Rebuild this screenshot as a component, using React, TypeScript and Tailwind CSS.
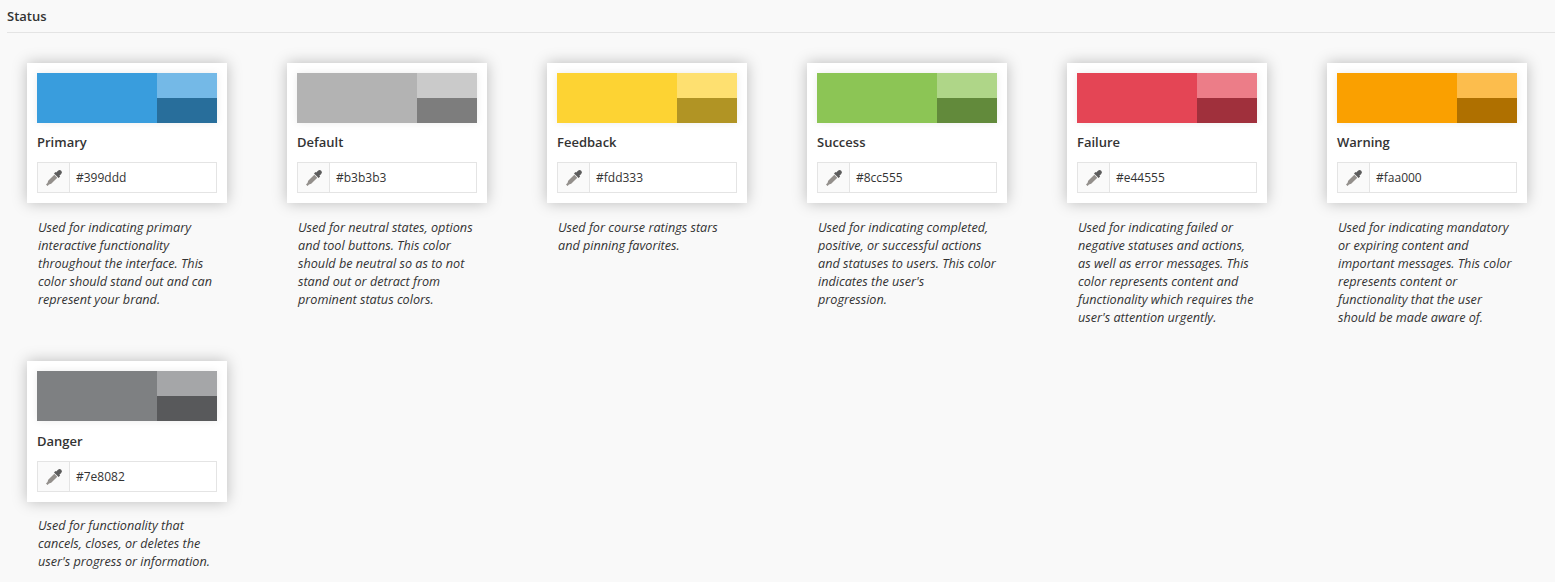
const swatches = [
  {
    name: "Primary",
    hex: "#399ddd",
    main: "bg-[#399ddd]",
    light: "bg-[#74b9e7]",
    dark: "bg-[#286e9b]",
    lines: [
      "Used for indicating primary",
      "interactive functionality",
      "throughout the interface. This",
      "color should stand out and can",
      "represent your brand.",
    ],
  },
  {
    name: "Default",
    hex: "#b3b3b3",
    main: "bg-[#b3b3b3]",
    light: "bg-[#cacaca]",
    dark: "bg-[#7d7d7d]",
    lines: [
      "Used for neutral states, options",
      "and tool buttons. This color",
      "should be neutral so as to not",
      "stand out or detract from",
      "prominent status colors.",
    ],
  },
  {
    name: "Feedback",
    hex: "#fdd333",
    main: "bg-[#fdd333]",
    light: "bg-[#fee070]",
    dark: "bg-[#b19424]",
    lines: ["Used for course ratings stars", "and pinning favorites."],
  },
  {
    name: "Success",
    hex: "#8cc555",
    main: "bg-[#8cc555]",
    light: "bg-[#afd688]",
    dark: "bg-[#628a3b]",
    lines: [
      "Used for indicating completed,",
      "positive, or successful actions",
      "and statuses to users. This color",
      "indicates the user's",
      "progression.",
    ],
  },
  {
    name: "Failure",
    hex: "#e44555",
    main: "bg-[#e44555]",
    light: "bg-[#ec7d88]",
    dark: "bg-[#a0303c]",
    lines: [
      "Used for indicating failed or",
      "negative statuses and actions,",
      "as well as error messages. This",
      "color represents content and",
      "functionality which requires the",
      "user's attention urgently.",
    ],
  },
  {
    name: "Warning",
    hex: "#faa000",
    main: "bg-[#faa000]",
    light: "bg-[#fcbd4d]",
    dark: "bg-[#af7000]",
    lines: [
      "Used for indicating mandatory",
      "or expiring content and",
      "important messages. This color",
      "represents content or",
      "functionality that the user",
      "should be made aware of.",
    ],
  },
  {
    name: "Danger",
    hex: "#7e8082",
    main: "bg-[#7e8082]",
    light: "bg-[#a5a6a8]",
    dark: "bg-[#58595b]",
    // this row lands a pixel lower in the screenshot
    titleGap: "mt-[11px]",
    lines: [
      "Used for functionality that",
      "cancels, closes, or deletes the",
      "user's progress or information.",
    ],
  },
];

function Eyedropper() {
  return (
    <svg viewBox="0 0 18 18" className="h-[18px] w-[18px]" aria-hidden="true">
      <path d="M11.2 3.6 13 1.8a2.2 2.2 0 0 1 3.2 3.2L14.4 6.8l.7.7-1.5 1.5-4.6-4.6 1.5-1.5z" fill="#5c5c5c" />
      <path d="M9.3 5.7 3.2 11.8 2.5 14 1 15.5 2.5 17 4 15.5l2.2-.7 6.1-6.1z" fill="#94908c" />
    </svg>
  );
}

export default function App() {
  return (
    <div className="h-[582px] w-[1555px] overflow-hidden bg-[#f9f9f9] pl-[7px] font-['Open_Sans',sans-serif] text-[#333]">
      <h2 className="h-[33px] w-full border-b border-[#e4e4e4] pt-[7px] text-[13px] leading-[18px] font-semibold">Status</h2>
      <div className="grid w-[1560px] grid-cols-[repeat(6,260px)] pt-[30px]">
        {swatches.map((s) => (
          <div key={s.name} className="h-[298px] px-[20px]">
            <div className="h-[155px]">
              <div className="w-[200px] bg-white p-[10px] shadow-[0_0_14px_rgba(0,0,0,0.25)]">
                <div className="flex h-[50px] shadow-[0_0_8px_rgba(0,0,0,0.08)]">
                  <div className={`w-[120px] ${s.main}`} />
                  <div className="flex w-[60px] flex-col">
                    <div className={`h-[25px] ${s.light}`} />
                    <div className={`h-[25px] ${s.dark}`} />
                  </div>
                </div>
                <p className={`${s.titleGap ?? "mt-[10px]"} text-[13px] leading-[19px] font-semibold`}>{s.name}</p>
                <div className="mt-[10px] flex h-[31px] border border-[#e4e4e4]">
                  <div className="flex w-[32px] items-center justify-center border-r border-[#e4e4e4] bg-[#fafafa]">
                    <Eyedropper />
                  </div>
                  <div className="pl-[6px] text-[12px] leading-[29px]">{s.hex}</div>
                </div>
              </div>
            </div>
            <p className="pl-[11px] text-[12.65px] leading-[18px] italic">
              {s.lines.map((line) => (
                <span key={line} className="block whitespace-nowrap">{line}</span>
              ))}
            </p>
          </div>
        ))}
      </div>
    </div>
  );
}
